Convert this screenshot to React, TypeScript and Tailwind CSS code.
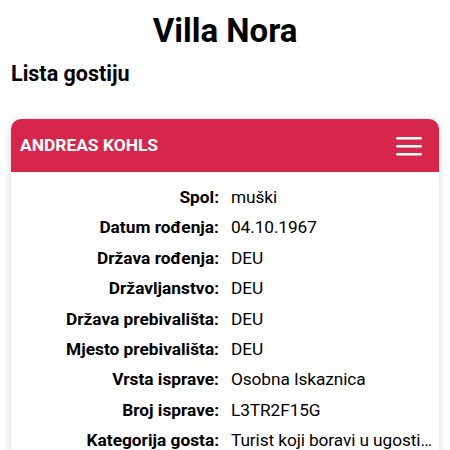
import React from 'react';

const rows: [string, string][] = [
  ['Spol:', 'muški'],
  ['Datum rođenja:', '04.10.1967'],
  ['Država rođenja:', 'DEU'],
  ['Državljanstvo:', 'DEU'],
  ['Država prebivališta:', 'DEU'],
  ['Mjesto prebivališta:', 'DEU'],
  ['Vrsta isprave:', 'Osobna Iskaznica'],
  ['Broj isprave:', 'L3TR2F15G'],
  ['Kategorija gosta:', 'Turist koji boravi u ugostiteljskom objektu'],
];

export default function App() {
  return (
    <div className="min-h-screen bg-white px-[11px] text-black" style={{ fontFamily: 'Roboto, "Noto Sans", sans-serif' }}>
      <h1 className="pt-[11px] text-center text-[33px] font-bold leading-[40px]">Villa Nora</h1>
      <h2 className="mt-[10px] text-[21.5px] font-bold leading-[26px]">Lista gostiju</h2>

      <div className="mt-[32px] overflow-hidden rounded-[10px] bg-white shadow-[0_1px_8px_rgba(0,0,0,0.16)]">
        <div className="flex h-[53px] items-center justify-between bg-[#d6264b] pl-[9px] pr-[17px]">
          <span className="text-[17.4px] font-bold text-white">ANDREAS KOHLS</span>
          <svg width="26" height="22" viewBox="0 0 26 22" className="text-white">
            <rect x="0" y="2" width="26" height="2.6" rx="1.3" fill="currentColor" />
            <rect x="0" y="10" width="26" height="2.6" rx="1.3" fill="currentColor" />
            <rect x="0" y="18" width="26" height="2.6" rx="1.3" fill="currentColor" />
          </svg>
        </div>

        <div className="pt-[10px] pb-2 text-[17.3px]">
          {rows.map(([label, value]) => (
            <div key={label} className="flex leading-[30.4px]">
              <div className="w-1/2 shrink-0 pr-[6px] text-right font-bold">{label}</div>
              <div className="w-1/2 min-w-0 truncate pl-[6px] pr-[2px] tracking-[-0.1px]">{value}</div>
            </div>
          ))}
        </div>
      </div>
    </div>
  );
}
